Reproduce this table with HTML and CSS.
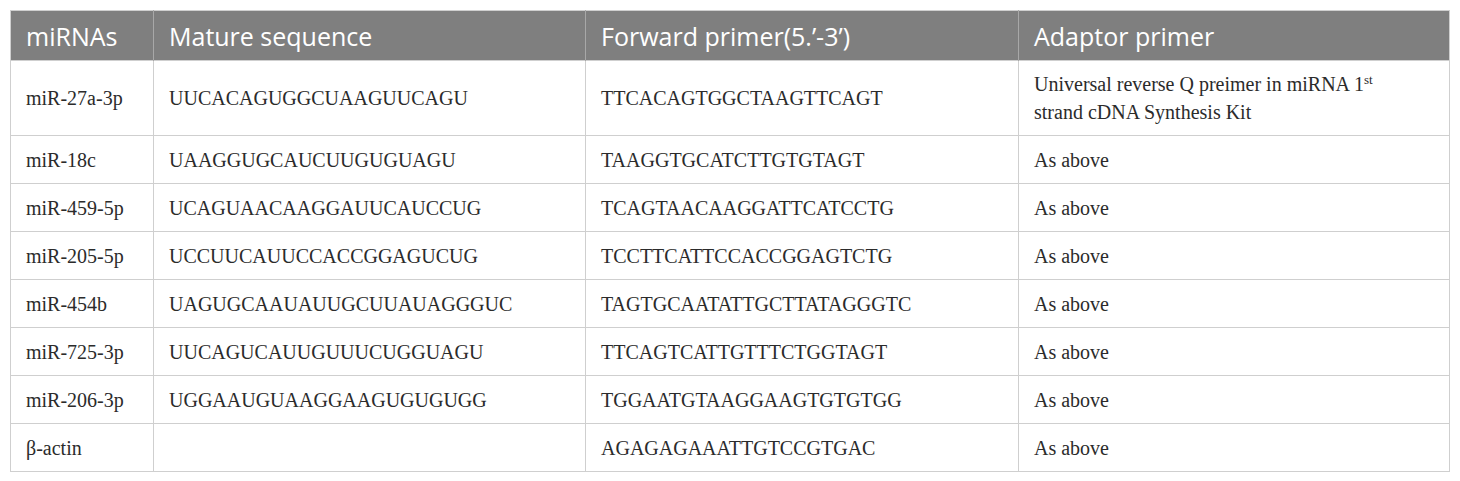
FILE: index.html
```html
<!DOCTYPE html>
<html>
<head>
<meta charset="utf-8">
<link rel="stylesheet" href="styles.css">
</head>
<body>
<table class="tbl">
  <colgroup>
    <col class="c1"><col class="c2"><col class="c3"><col class="c4">
  </colgroup>
  <thead>
    <tr><th>miRNAs</th><th>Mature sequence</th><th>Forward primer(5.’-3’)</th><th>Adaptor primer</th></tr>
  </thead>
  <tbody>
    <tr class="tall"><td>miR-27a-3p</td><td>UUCACAGUGGCUAAGUUCAGU</td><td>TTCACAGTGGCTAAGTTCAGT</td><td>Universal reverse Q preimer in miRNA 1<sup>st</sup><br>strand cDNA Synthesis Kit</td></tr>
    <tr><td>miR-18c</td><td>UAAGGUGCAUCUUGUGUAGU</td><td>TAAGGTGCATCTTGTGTAGT</td><td>As above</td></tr>
    <tr><td>miR-459-5p</td><td>UCAGUAACAAGGAUUCAUCCUG</td><td>TCAGTAACAAGGATTCATCCTG</td><td>As above</td></tr>
    <tr><td>miR-205-5p</td><td>UCCUUCAUUCCACCGGAGUCUG</td><td>TCCTTCATTCCACCGGAGTCTG</td><td>As above</td></tr>
    <tr><td>miR-454b</td><td>UAGUGCAAUAUUGCUUAUAGGGUC</td><td>TAGTGCAATATTGCTTATAGGGTC</td><td>As above</td></tr>
    <tr><td>miR-725-3p</td><td>UUCAGUCAUUGUUUCUGGUAGU</td><td>TTCAGTCATTGTTTCTGGTAGT</td><td>As above</td></tr>
    <tr><td>miR-206-3p</td><td>UGGAAUGUAAGGAAGUGUGUGG</td><td>TGGAATGTAAGGAAGTGTGTGG</td><td>As above</td></tr>
    <tr><td>β-actin</td><td></td><td>AGAGAGAAATTGTCCGTGAC</td><td>As above</td></tr>
  </tbody>
</table>
</body>
</html>
```
FILE: styles.css
```css
html, body {
  margin: 0;
  background: #ffffff;
}
body {
  padding: 10px 0 0 10px;
}
.tbl {
  border-collapse: collapse;
  table-layout: fixed;
  width: 1439px;
  border: 1px solid #cfcfcf;
}
.c1 { width: 143px; }
.c2 { width: 432px; }
.c3 { width: 433px; }
.c4 { width: 431px; }
.tbl th {
  background: #7f7f7f;
  color: #ffffff;
  font-family: "Open Sans", "Noto Sans", sans-serif;
  font-weight: 400;
  font-size: 25px;
  text-align: left;
  height: 50px;
  padding: 0 15px;
  box-sizing: border-box;
  border-left: 1px solid #a8a8a8;
  vertical-align: middle;
}
.tbl th:first-child { border-left: none; }
.tbl td {
  font-family: "Liberation Serif", "Times New Roman", serif;
  font-size: 20px;
  line-height: 28px;
  color: #2b2b2b;
  height: 48px;
  padding: 0 15px;
  box-sizing: border-box;
  border: 1px solid #cfcfcf;
  vertical-align: middle;
}
.tbl tr.tall td {
  height: 75px;
}
.tbl sup {
  font-size: 13px;
  line-height: 0;
  vertical-align: 7px;
}
```
